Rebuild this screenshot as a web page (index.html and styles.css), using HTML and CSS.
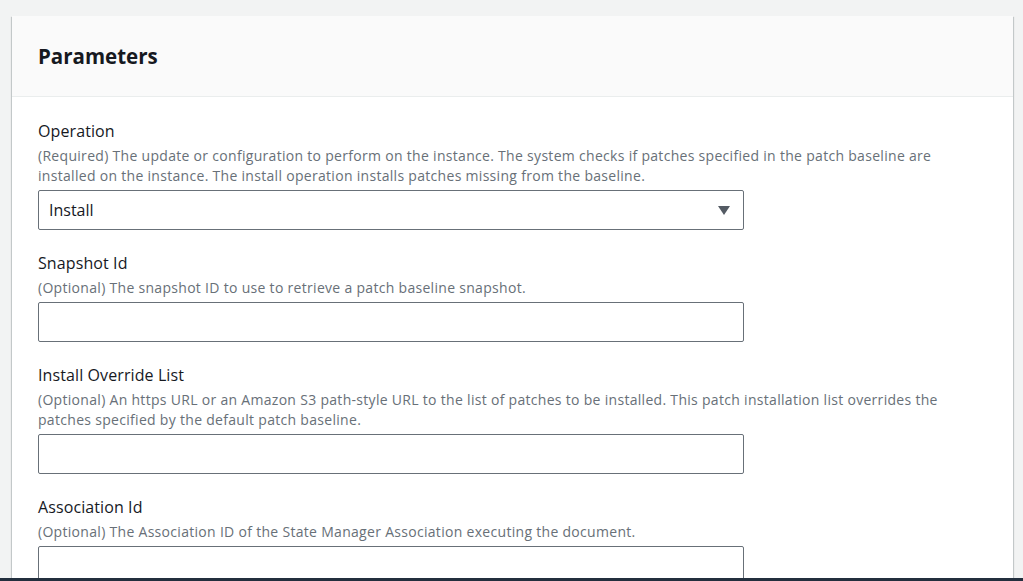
FILE: index.html
```html
<!DOCTYPE html>
<html lang="en">
<head>
<meta charset="utf-8">
<title>Parameters</title>
<link rel="stylesheet" href="styles.css">
</head>
<body>
<div class="page">
  <section class="card">
    <header class="card-header">
      <h2 class="card-title">Parameters</h2>
    </header>
    <div class="card-body">
      <div class="field">
        <label class="field-label">Operation</label>
        <p class="field-desc">(Required) The update or configuration to perform on the instance. The system checks if patches specified in the patch baseline are installed on the instance. The install operation installs patches missing from the baseline.</p>
        <div class="control select">
          <span class="select-value">Install</span>
          <svg class="caret" width="12" height="9" viewBox="0 0 12 9"><path d="M0 0h12L6 9z" fill="#545b64"/></svg>
        </div>
      </div>
      <div class="field">
        <label class="field-label">Snapshot Id</label>
        <p class="field-desc">(Optional) The snapshot ID to use to retrieve a patch baseline snapshot.</p>
        <div class="control input"></div>
      </div>
      <div class="field">
        <label class="field-label">Install Override List</label>
        <p class="field-desc">(Optional) An https URL or an Amazon S3 path-style URL to the list of patches to be installed. This patch installation list overrides the patches specified by the default patch baseline.</p>
        <div class="control input"></div>
      </div>
      <div class="field">
        <label class="field-label">Association Id</label>
        <p class="field-desc">(Optional) The Association ID of the State Manager Association executing the document.</p>
        <div class="control input"></div>
      </div>
    </div>
  </section>
</div>
<div class="bottom-bar"></div>
</body>
</html>
```

FILE: styles.css
```css
html, body {
  margin: 0;
  padding: 0;
  overflow: hidden;
  height: 100%;
}
body {
  background: #f2f3f3;
  font-family: "Open Sans", "Noto Sans", sans-serif;
  color: #16191f;
}
.page {
  padding: 16px 10px 0 12px;
}
.card {
  background: #ffffff;
  box-shadow: 0 1px 1px 0 rgba(0, 28, 36, 0.3), 1px 1px 1px 0 rgba(0, 28, 36, 0.15), -1px 1px 1px 0 rgba(0, 28, 36, 0.15);
}
.card-header {
  background: #fafafa;
  border-bottom: 1px solid #eaeded;
  padding: 20px 26px 20px;
}
.card-title {
  margin: 0;
  font-size: 20.5px;
  line-height: 40px;
  font-weight: 700;
}
.card-body {
  padding: 23px 26px 40px;
  display: flex;
  flex-direction: column;
  gap: 22px;
}
.field {
  display: flex;
  flex-direction: column;
}
.field-label {
  font-size: 16px;
  line-height: 22px;
  color: #16191f;
  letter-spacing: 0.1px;
}
.field-desc {
  margin: 4px 0 0;
  font-size: 14px;
  line-height: 20px;
  color: #687078;
  max-width: 945px;
  letter-spacing: 0.3px;
}
.input {
  margin-top: 5px;
}
.control {
  margin-top: 4px;
  width: 706px;
  height: 40px;
  box-sizing: border-box;
  border: 1px solid #687078;
  border-radius: 2px;
  background: #ffffff;
}
.select {
  display: flex;
  align-items: center;
  justify-content: space-between;
  padding: 0 13px 0 10px;
}
.select-value {
  font-size: 16px;
  color: #16191f;
}
.caret {
  display: block;
}
.bottom-bar {
  position: fixed;
  left: 0;
  right: 0;
  bottom: 0;
  height: 3px;
  background: #232f3e;
}
```
